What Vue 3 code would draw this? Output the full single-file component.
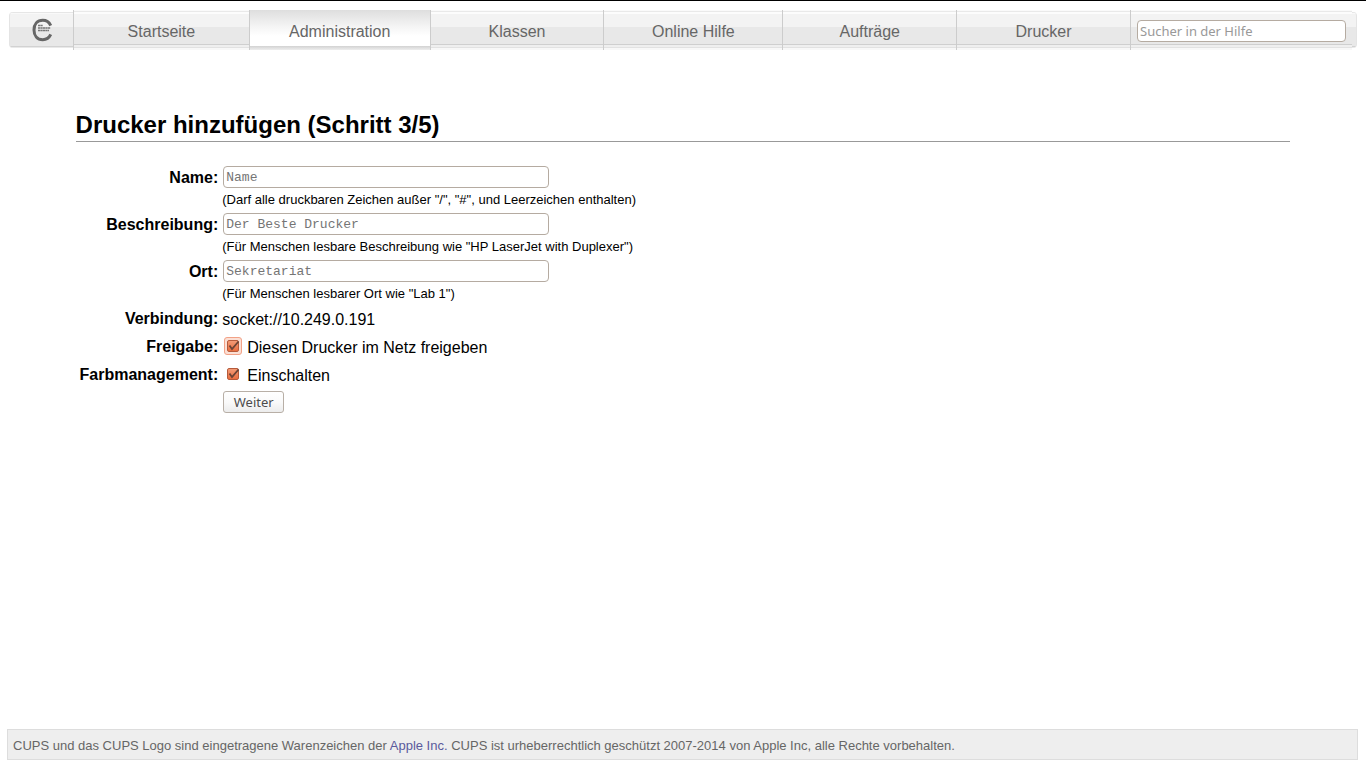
<script setup>
import { ref } from 'vue'

const tabs = [
  { label: 'Startseite', grow: 176 },
  { label: 'Administration', grow: 181, active: true },
  { label: 'Klassen', grow: 174 },
  { label: 'Online Hilfe', grow: 179 },
  { label: 'Aufträge', grow: 174 },
  { label: 'Drucker', grow: 174 },
]

const fields = [
  { id: 'name', label: 'Name:', placeholder: 'Name', hint: '(Darf alle druckbaren Zeichen außer "/", "#", und Leerzeichen enthalten)' },
  { id: 'info', label: 'Beschreibung:', placeholder: 'Der Beste Drucker', hint: '(Für Menschen lesbare Beschreibung wie "HP LaserJet with Duplexer")' },
  { id: 'location', label: 'Ort:', placeholder: 'Sekretariat', hint: '(Für Menschen lesbarer Ort wie "Lab 1")' },
]

const shared = ref(true)
const colour = ref(true)
</script>

<template>
  <div class="page">
    <header class="bar">
      <a class="logo" href="#" aria-label="CUPS">
        <svg width="20" height="24" viewBox="0 0 20 24">
          <path d="M18.700 7.500C17 3.800 14 2.300 10.800 2.300C5.200 2.300 2 6.500 2 12C2 17.500 5.200 21.700 10.800 21.700C14 21.700 17 20.200 18.700 16.500" fill="none" stroke="#666" stroke-width="3" />
          <path d="M6 7.500H11M6 10H18.500M6 12.500H17" stroke="#777" stroke-width="1.400" stroke-dasharray="2.200 .3" />
        </svg>
      </a>
      <nav class="tabs">
        <a v-for="t in tabs" :key="t.label" href="#" class="tab" :class="{ active: t.active }" :style="{ flexGrow: t.grow }">{{ t.label }}</a>
      </nav>
      <form class="search" @submit.prevent>
        <input type="search" placeholder="Sucher in der Hilfe" aria-label="Sucher in der Hilfe">
      </form>
    </header>

    <main class="content">
      <h1>Drucker hinzufügen (Schritt 3/5)</h1>
      <form class="form" @submit.prevent>
        <template v-for="f in fields" :key="f.id">
          <label class="key" :for="f.id">{{ f.label }}</label>
          <div class="field">
            <input :id="f.id" class="text" type="text" :placeholder="f.placeholder">
            <small>{{ f.hint }}</small>
          </div>
        </template>
        <span class="key">Verbindung:</span>
        <span class="value">socket://10.249.0.191</span>
        <span class="key">Freigabe:</span>
        <label class="value check">
          <span class="box focus">
            <input v-model="shared" type="checkbox">
            <svg v-if="shared" width="16" height="16" viewBox="0 0 16 16"><path d="M4.500 7.500L7 11L13.500 3.500" fill="none" stroke="#6b4335" stroke-width="1.800" /></svg>
          </span>
          Diesen Drucker im Netz freigeben
        </label>
        <span class="key">Farbmanagement:</span>
        <label class="value check">
          <span class="box">
            <input v-model="colour" type="checkbox">
            <svg v-if="colour" width="16" height="16" viewBox="0 0 16 16"><path d="M4.500 7.500L7 11L13.500 3.500" fill="none" stroke="#6b4335" stroke-width="1.800" /></svg>
          </span>
          Einschalten
        </label>
        <button class="next" type="submit">Weiter</button>
      </form>
    </main>

    <footer class="foot">
      CUPS und das CUPS Logo sind eingetragene Warenzeichen der <a href="#">Apple Inc.</a> CUPS ist urheberrechtlich geschützt 2007-2014 von Apple Inc, alle Rechte vorbehalten.
    </footer>
  </div>
</template>

<style>
body {
  margin: 0;
  background: #fff;
}
</style>

<style scoped>
.page {
  box-sizing: border-box;
  min-height: 100vh;
  display: flex;
  flex-direction: column;
  border-top: 1px solid #000;
  padding: 9px 8px 8px 7px;
  font-family: "Liberation Sans", Arial, sans-serif;
  font-size: 16px;
  color: #000;
}
.page * {
  box-sizing: border-box;
}
.bar {
  display: flex;
  height: 40px;
  margin: 0 1px 0 2px;
}
.search,
.tab {
  background: linear-gradient(#fafafa 0 1px, #e9e9e9 1px 2px, #fcfcfc 2px 4px, #f3f3f3 4px 17px, #e8e8e8 17px 34px, #cfcfcf 34px 35px, #efefef 35px 37px, #e2e2e2 37px 38px, #f8f8f8 38px);
}
.logo,
.bar::after {
  height: 36px;
  margin: 2px 0;
  background: linear-gradient(#e6e6e6 0 1px, #f9f9f9 1px 2px, #f3f3f3 2px 15px, #e8e8e8 15px 34px, #d2d2d2 34px 35px, #e9e9e9 35px);
}
.logo {
  flex: 0 0 64px;
  display: flex;
  align-items: center;
  justify-content: center;
  border-left: 1px solid #e4e4e4;
  border-radius: 4px 0 0 4px;
}
.bar::after {
  content: "";
  flex: 0 0 4px;
  border-right: 1px solid #e4e4e4;
  border-radius: 0 4px 4px 0;
}
.tabs {
  flex: 1;
  display: flex;
  border-left: 1px solid #ccc;
}
.tab {
  flex: 1 1 0;
  height: 40px;
  line-height: 44px;
  text-align: center;
  color: #666;
  text-decoration: none;
  border-right: 1px solid #ccc;
}
.tab.active {
  background: linear-gradient(#dedede 0, #f5f5f5 17px, #fff 26px 36px, #d2d2d2 36px, #eee 40px);
}
.search {
  flex: 0 0 221px;
  padding: 10px 6px 0;
}
.search input,
.text {
  display: block;
  height: 22px;
  border: 1px solid #b5aba1;
  border-radius: 4px;
  background: #fff;
  padding: 0 2px;
  outline: 0;
  appearance: none;
}
.search input {
  width: 100%;
  font: 13px "Noto Sans", "Open Sans", sans-serif;
}
.search input::placeholder {
  color: #999;
  opacity: 1;
}
.content {
  flex: 1;
  margin: 0 5%;
  padding: 60px 0 20px 1px;
}
h1 {
  margin: 0 0 22px;
  height: 32px;
  line-height: 30px;
  font-size: 24px;
  font-weight: bold;
  border-bottom: 1px solid #999;
}
.form {
  display: grid;
  grid-template-columns: auto 1fr;
  column-gap: 4px;
  padding-left: 4px;
}
.key {
  font-weight: bold;
  line-height: 28px;
  text-align: right;
}
.field {
  height: 47px;
  padding-top: 2px;
}
.text {
  width: 326px;
  max-width: 100%;
  margin-left: 1px;
  font: 13px "Liberation Mono", "Courier New", monospace;
}
.text::placeholder {
  color: #757575;
  opacity: 1;
}
small {
  display: block;
  font-size: 13px;
  line-height: 23px;
}
.value {
  height: 28px;
  line-height: 30px;
}
.check {
  display: flex;
}
.box {
  position: relative;
  flex: none;
  width: 18px;
  height: 18px;
  margin: 4px 5px 0 2px;
  border: 1px solid transparent;
  border-radius: 3px;
}
.box.focus {
  border-color: #f2a287;
  background: #fbdfd4;
}
.box input {
  appearance: none;
  display: block;
  width: 12px;
  height: 12px;
  margin: 2px;
  border: 1px solid #b65b3b;
  border-radius: 2px;
  background: linear-gradient(#f39a75, #e96d3f);
}
.box svg {
  position: absolute;
  left: 0;
  top: 0;
  pointer-events: none;
}
.next {
  grid-column: 2;
  justify-self: start;
  width: 61px;
  height: 22px;
  margin: 2px 0 0 1px;
  padding: 0;
  border: 1px solid #b8afa6;
  border-radius: 3px;
  background: linear-gradient(#fff, #fafafa 50%, #ececec);
  color: #4c4c4c;
  font: 13px "Noto Sans", "Open Sans", sans-serif;
}
.foot {
  border: 1px solid #ddd;
  background: #eee;
  color: #666;
  font-size: 13px;
  line-height: 19px;
  padding: 6px 5px 4px;
}
.foot a {
  color: #5a5a9c;
  text-decoration: none;
}
</style>
